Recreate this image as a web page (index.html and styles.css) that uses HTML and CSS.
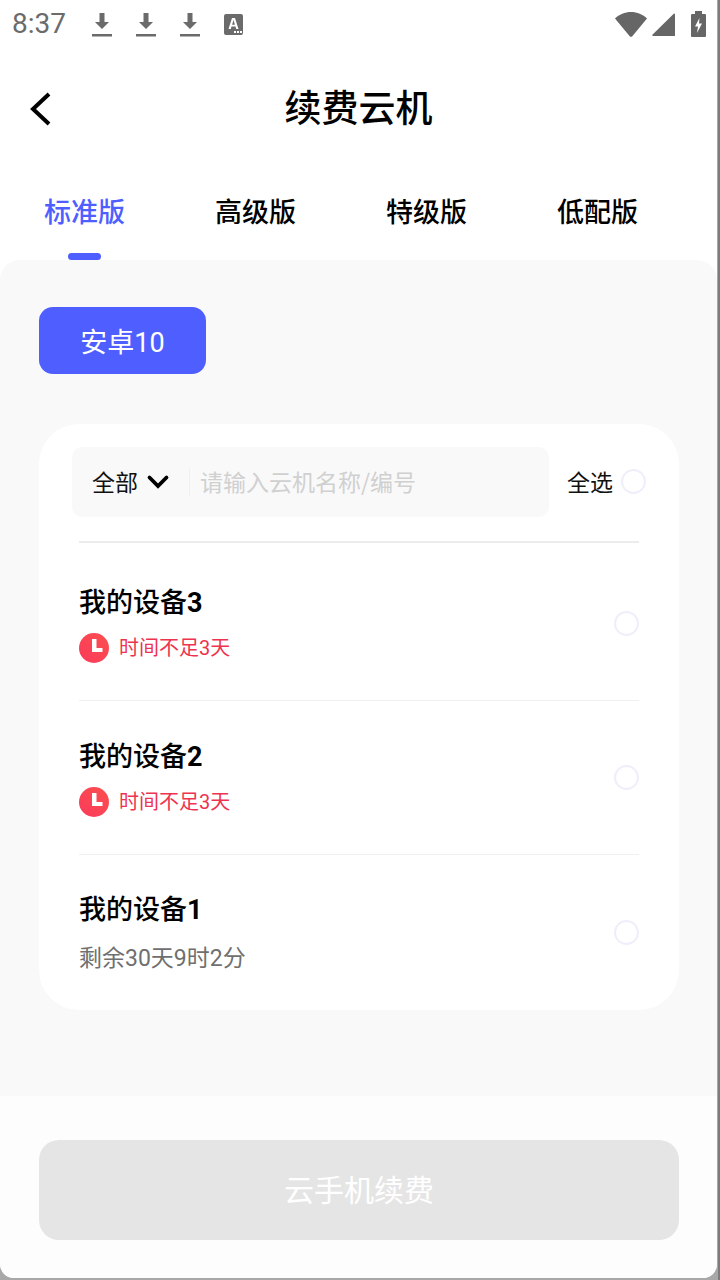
FILE: index.html
```html
<!DOCTYPE html>
<html lang="zh-CN">
<head>
<meta charset="utf-8">
<title>续费云机</title>
<link rel="stylesheet" href="styles.css">
</head>
<body>
<div class="screen">
  <div class="status">
    <span class="time">8:37</span>
    <div class="notes">
      <svg class="dl" viewBox="0 0 20 26"><path d="M7.500 2h5v9h4.500L10 18 3 11h4.500z"/><rect y="23" width="20" height="2.500"/></svg>
      <svg class="dl" viewBox="0 0 20 26"><path d="M7.500 2h5v9h4.500L10 18 3 11h4.500z"/><rect y="23" width="20" height="2.500"/></svg>
      <svg class="dl" viewBox="0 0 20 26"><path d="M7.500 2h5v9h4.500L10 18 3 11h4.500z"/><rect y="23" width="20" height="2.500"/></svg>
      <svg class="aa" viewBox="0 0 19 21"><path fill-rule="evenodd" d="M2 0h15a2 2 0 0 1 2 2v17a2 2 0 0 1-2 2H2a2 2 0 0 1-2-2V2a2 2 0 0 1 2-2zM8 4 4.500 15h2.300l.7-2.400h4l.7 2.400h2.300L11 4zm.1 6.800L9.500 6l1.400 4.800z"/><rect x="10" y="17" width="2" height="2" fill="#fff"/><rect x="13" y="17" width="2" height="2" fill="#fff"/><rect x="16" y="17" width="2" height="2" fill="#fff"/></svg>
    </div>
    <div class="sys">
      <svg class="wifi" viewBox="0 0 32 25"><path d="M0 6.500C4 2.500 10 0 16 0s12 2.500 16 6.500L17.500 24a2 2 0 0 1-3 0z"/></svg>
      <svg class="signal" viewBox="0 0 23 23"><path d="M22 .5a1 1 0 0 1 1 1V23H1a.8.800 0 0 1-.6-1.300z"/></svg>
      <svg class="batt" viewBox="0 0 15 26"><path fill-rule="evenodd" d="M4 0h7v3h3a1 1 0 0 1 1 1v21a1 1 0 0 1-1 1H1a1 1 0 0 1-1-1V4a1 1 0 0 1 1-1h3zM8.500 7 4 15.500h3L6 22l5-9.500H8z"/></svg>
    </div>
  </div>

  <header class="topbar">
    <svg class="back" viewBox="0 0 24 36"><path d="M20 3 4 18l16 15"/></svg>
    <h1 class="title">续费云机</h1>
  </header>

  <nav class="tabs">
    <div class="tab active">标准版<span class="ink"></span></div>
    <div class="tab">高级版</div>
    <div class="tab">特级版</div>
    <div class="tab">低配版</div>
  </nav>

  <main class="panel">
    <button class="version">安卓10</button>
    <section class="card">
      <div class="toolbar">
        <div class="search">
          <span class="filter">全部</span>
          <svg class="chev" viewBox="0 0 20 12"><path d="M1.500 1.500l8.500 8.500 8.500-8.500"/></svg>
          <span class="sep"></span>
          <span class="placeholder">请输入云机名称/编号</span>
        </div>
        <span class="all">全选</span>
        <span class="radio"></span>
      </div>
      <div class="list">
        <div class="row first">
          <div class="info">
            <div class="name">我的设备<b class="num">3</b></div>
            <div class="meta warn"><svg class="clock" viewBox="0 0 30 30"><defs><linearGradient id="g1" x1="0" y1="1" x2="1" y2="0"><stop offset="0" stop-color="#fb3a5a"/><stop offset="1" stop-color="#fb4f4f"/></linearGradient></defs><circle cx="15" cy="15" r="15" fill="url(#g1)"/><path d="M13 6h4.500v9H23.500v4H13z" fill="#fff"/></svg>时间不足3天</div>
          </div>
          <span class="radio"></span>
        </div>
        <div class="row">
          <div class="info">
            <div class="name">我的设备<b class="num">2</b></div>
            <div class="meta warn"><svg class="clock" viewBox="0 0 30 30"><circle cx="15" cy="15" r="15" fill="url(#g1)"/><path d="M13 6h4.500v9H23.500v4H13z" fill="#fff"/></svg>时间不足3天</div>
          </div>
          <span class="radio"></span>
        </div>
        <div class="row">
          <div class="info">
            <div class="name">我的设备<b class="num">1</b></div>
            <div class="meta rest">剩余30天9时2分</div>
          </div>
          <span class="radio"></span>
        </div>
      </div>
    </section>
  </main>

  <footer class="footer">
    <button class="renew">云手机续费</button>
  </footer>
</div>
</body>
</html>
```
FILE: styles.css
```css
* { box-sizing: border-box; }
html, body { margin: 0; padding: 0; }
body {
  width: 720px;
  height: 1280px;
  background: linear-gradient(90deg, #a8a8a8 718px, #7c7c7c 718px);
  overflow: hidden;
  font-family: "Noto Sans CJK SC", Roboto, sans-serif;
}
.screen {
  width: 717px;
  height: 1278px;
  background: #fff;
  border-radius: 0 0 14px 14px;
  overflow: hidden;
  display: flex;
  flex-direction: column;
}
.status {
  height: 48px;
  display: flex;
  align-items: center;
  padding: 0 13px 0 12px;
  color: #6b6b6b;
}
.time {
  font-family: Roboto, sans-serif;
  font-size: 28px;
  width: 80px;
  line-height: 48px;
}
.notes { display: flex; align-items: center; gap: 24px; flex: 1; }
.notes svg { fill: #6b6b6b; display: block; }
.dl { width: 20px; height: 26px; }
.aa { width: 19px; height: 21px; }
.sys { display: flex; align-items: center; }
.sys svg { fill: #666; display: block; }
.wifi { width: 32px; height: 25px; }
.signal { width: 23px; height: 23px; margin-left: 5px; }
.batt { width: 15px; height: 26px; margin-left: 16px; margin-right: -2px; }

.topbar {
  height: 120px;
  padding-bottom: 4px;
  display: flex;
  align-items: center;
  justify-content: center;
  position: relative;
}
.back {
  position: absolute;
  left: 29px;
  top: 43px;
  width: 24px;
  height: 36px;
  fill: none;
  stroke: #000;
  stroke-width: 4;
}
.title {
  margin: 0;
  font-size: 37px;
  font-weight: 500;
  line-height: 50px;
  color: #000;
}

.tabs { display: flex; width: 684px; height: 92px; margin-left: -1px; }
.tab {
  flex: 1;
  position: relative;
  text-align: center;
  font-size: 27px;
  font-weight: 500;
  line-height: 40px;
  color: #000;
  padding-top: 23px;
}
.tab.active { color: #4f5fff; }
.ink {
  position: absolute;
  left: 69px;
  top: 85px;
  width: 33px;
  height: 7px;
  border-radius: 4px;
  background: #4f5fff;
}

.panel {
  height: 836px;
  background: #f9f9f9;
  border-radius: 20px 20px 0 0;
  padding: 47px 38px 0 39px;
}
.version {
  display: block;
  width: 167px;
  height: 67px;
  border: 0;
  border-radius: 14px;
  background: #4f5fff;
  color: #fff;
  font-family: Roboto, "Noto Sans CJK SC", sans-serif;
  font-size: 27px;
  padding: 0 0 1px;
}
.card {
  margin-top: 50px;
  height: 586px;
  background: #fff;
  border-radius: 40px;
  padding: 23px 40px 0 33px;
}
.toolbar { display: flex; align-items: center; height: 70px; }
.search {
  width: 477px;
  height: 70px;
  border-radius: 10px;
  background: #f9f9f9;
  display: flex;
  align-items: center;
  padding-left: 20px;
  flex: none;
}
.filter { font-size: 23px; color: #111; line-height: 32px; margin-top: -2px; }
.chev { width: 20px; height: 12px; margin-left: 10px; fill: none; stroke: #000; stroke-width: 3.800; stroke-linecap: round; overflow: visible; }
.sep { width: 1px; height: 28px; background: #f0f0f0; margin-left: 21px; }
.placeholder { font-size: 23px; color: #d0d0d0; margin-left: 10px; line-height: 32px; margin-top: -2px; }
.all { font-size: 23px; color: #111; margin-left: 18px; line-height: 32px; margin-top: -2px; flex: none; white-space: nowrap; }
.radio {
  width: 25px;
  height: 25px;
  border-radius: 50%;
  border: 2px solid #eeeffa;
  background: #fff;
  flex: none;
}
.toolbar .radio { margin-left: 8px; margin-right: -7px; margin-top: -1px; }
.list { margin: 24px 0 0 7px; }
.row {
  height: 154px;
  border-top: 1px solid #f0f0f0;
  display: flex;
  align-items: center;
  justify-content: space-between;
}
.row.first { height: 159px; border-top: 2px solid #ececec; padding-top: 4px; }
.row:last-child { height: 155px; }
.info { display: flex; flex-direction: column; padding-bottom: 2px; }
.name { font-size: 27px; font-weight: 500; line-height: 38px; margin-top: 2px; color: #000; font-family: Roboto, "Noto Sans CJK SC", sans-serif; }
.num { font-weight: 700; }
.meta {
  display: flex;
  align-items: center;
  font-size: 20px;
  line-height: 30px;
  margin-top: 11px;
  font-family: Roboto, "Noto Sans CJK SC", sans-serif;
}
.warn { color: #ee3350; }
.rest { color: #6f6f6f; font-size: 23px; margin-top: 15px; }
.clock { width: 30px; height: 30px; margin-right: 10px; flex: none; }

.footer {
  flex: 1;
  background: #fdfdfd;
  padding: 44px 38px 0 39px;
}
.renew {
  display: block;
  width: 640px;
  height: 100px;
  border: 0;
  border-radius: 20px;
  background: #e5e5e5;
  color: #fff;
  font-family: "Noto Sans CJK SC", sans-serif;
  font-size: 30px;
  padding: 0 0 4px;
}
```
